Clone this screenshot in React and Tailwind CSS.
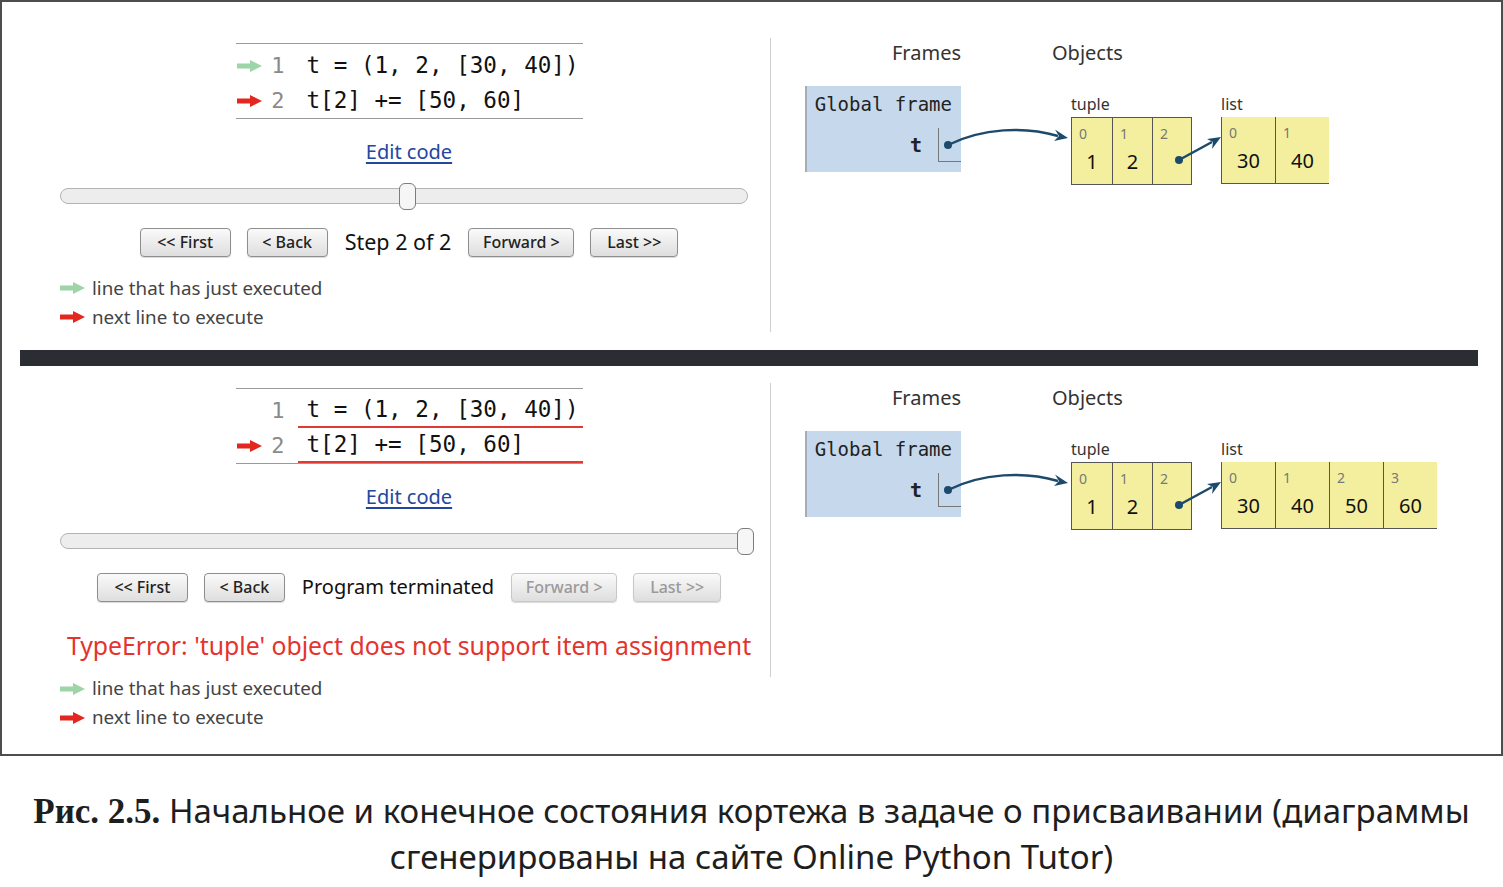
import React from 'react';

const ui = { fontFamily: '"Noto Sans", "Open Sans", sans-serif' };
const mono = { fontFamily: '"DejaVu Sans Mono", "Liberation Mono", monospace' };

const Arrow = ({ color }) => (
  <svg width="26" height="14" viewBox="0 0 26 14">
    <rect x="0" y="4.5" width="15" height="5" fill={color} />
    <polygon points="13,1 25,7 13,13" fill={color} />
  </svg>
);

const CodeBlock = ({ final }) => {
  const lines = [
    { n: 1, code: 't = (1, 2, [30, 40])', arrow: final ? null : '#9dd4a8' },
    { n: 2, code: 't[2] += [50, 60]', arrow: '#e3261f' },
  ];
  return (
    <div className="self-center w-[347px] border-t border-b border-[#9a9a9a] pt-[4px]" style={mono}>
      {lines.map((l) => (
        <div key={l.n} className="flex items-stretch h-[35px]">
          <div className="w-[30px] flex items-center pl-[1px]">{l.arrow && <Arrow color={l.arrow} />}</div>
          <div className="w-[19px] flex items-center justify-end text-[22px] text-[#8a8a8a]">{l.n}</div>
          <div
            className={`ml-[13px] pl-[9px] flex-1 flex items-center text-[22.6px] text-[#111] whitespace-pre ${
              final ? 'border-b-2 border-[#e03a32]' : ''
            }`}
          >
            {l.code}
          </div>
        </div>
      ))}
    </div>
  );
};

const Btn = ({ children, w, disabled }) => (
  <div
    className={`h-[29px] flex items-center justify-center rounded-[4px] border text-[16px] font-medium shadow-[0_1px_1px_rgba(0,0,0,0.15)] bg-gradient-to-b from-[#fafafa] to-[#dedede] ${
      disabled ? 'border-[#c8c8c8] text-[#9a9a9a]' : 'border-[#8e8e8e] text-[#222]'
    } ${w}`}
  >
    {children}
  </div>
);

const Legend = () => (
  <div className="self-start text-[18.8px] text-[#444]">
    <div className="h-[29px] flex items-center gap-[6px]">
      <Arrow color="#9dd4a8" />
      <span>line that has just executed</span>
    </div>
    <div className="h-[29px] flex items-center gap-[6px]">
      <Arrow color="#e3261f" />
      <span>next line to execute</span>
    </div>
  </div>
);

const Slider = ({ pos }) => (
  <div className="relative self-start w-[688px] h-[27px] mt-[19px]">
    <div className="absolute left-0 right-0 top-[5px] h-[16px] rounded-[8px] border border-[#b3b3b3] bg-[#ededed]" />
    <div
      className="absolute top-0 w-[17px] h-[27px] rounded-[6px] border border-[#7c7c7c] bg-[#f6f6f6]"
      style={{ left: pos }}
    />
  </div>
);

const Cell = ({ idx, val, w, cls }) => (
  <div className={`relative flex items-end justify-center pb-[7px] ${w} ${cls}`}>
    <span className="absolute left-[7px] top-[5px] text-[14px] text-[#777]">{idx}</span>
    <span className="text-[20px] text-[#111]">{val}</span>
  </div>
);

const Diagram = ({ list }) => (
  <div className="relative w-[680px] h-[160px]" style={ui}>
    <div className="flex h-[26px] items-center text-[20px] text-[#333]">
      <div className="w-[161px] text-right">Frames</div>
      <div className="ml-[91px]">Objects</div>
    </div>
    <div className="flex mt-[20px]">
      <div className="ml-[5px] w-[156px] h-[86px] bg-[#c5d8ec] border-l-2 border-[#a3aeb5] flex flex-col items-end">
        <div className="pr-[9px] mt-[6px] text-[19px] text-[#222] leading-[24px]" style={mono}>
          Global frame
        </div>
        <div className="flex items-center mt-[12px]">
          <span className="text-[20px] text-[#222] font-bold mr-[16px]" style={mono}>t</span>
          <div className="w-[23px] h-[34px] border-l border-b border-[#777]" />
        </div>
      </div>
      <div className="ml-[110px] mt-[8px]">
        <div className="h-[20px] leading-[20px] text-[16px] text-[#333]">tuple</div>
        <div className="mt-[3px] flex border-[1.5px] border-[#555] bg-[#f3ef9e]">
          <Cell idx="0" val="1" w="w-[40px] h-[66px]" />
          <Cell idx="1" val="2" w="w-[40px] h-[66px]" cls="border-l-[1.5px] border-[#555]" />
          <Cell idx="2" val="" w="w-[39px] h-[66px]" cls="border-l-[1.5px] border-[#555]" />
        </div>
      </div>
      <div className="ml-[29px] mt-[8px]">
        <div className="h-[20px] leading-[20px] text-[16px] text-[#333]">list</div>
        <div className="mt-[3px] flex bg-[#f3ef9e] border-b-[1.5px] border-[#555]">
          {list.map((v, i) => (
            <Cell key={i} idx={String(i)} val={v} w="w-[54px] h-[66px]" cls="border-l-[1.5px] border-[#555]" />
          ))}
        </div>
      </div>
    </div>
    <svg className="absolute left-0 top-0" width="680" height="160" viewBox="0 0 680 160">
      <circle cx="148" cy="105" r="4" fill="#1d4a6b" />
      <path d="M148 105 C 182 88, 225 86, 258 96" stroke="#1d4a6b" strokeWidth="2.5" fill="none" />
      <polygon points="268,98 255,89.5 259,96 254,101" fill="#1d4a6b" />
      <circle cx="379" cy="120" r="4" fill="#1d4a6b" />
      <path d="M379 120 L 412 102" stroke="#1d4a6b" strokeWidth="2.5" fill="none" />
      <polygon points="421,97 407,99 413,102 412,109" fill="#1d4a6b" />
    </svg>
  </div>
);

const Panel = ({ final }) => (
  <div className={`flex ${final ? 'h-[388px]' : 'h-[348px]'}`} style={ui}>
    <div className={`w-[768px] pl-[58px] pr-[12px] flex flex-col ${final ? 'pt-[22px]' : 'pt-[41px]'}`}>
      <CodeBlock final={final} />
      <div className="self-center mt-[21px] text-[20px] leading-[24px] text-[#2346a0] underline underline-offset-[3px]">
        Edit code
      </div>
      <Slider pos={final ? 677 : 339} />
      <div className={`self-center flex items-center gap-[16px] ${final ? 'mt-[17px]' : 'mt-[16px]'}`}>
        <Btn w="w-[91px]">&lt;&lt; First</Btn>
        <Btn w="w-[81px]">&lt; Back</Btn>
        <div className={`text-[#111] px-[1px] ${final ? 'text-[20px]' : 'text-[21.5px]'}`}>
          {final ? 'Program terminated' : 'Step 2 of 2'}
        </div>
        <Btn w="w-[106px]" disabled={final}>Forward &gt;</Btn>
        <Btn w="w-[88px]" disabled={final}>Last &gt;&gt;</Btn>
      </div>
      {final && (
        <div className="self-center mt-[28px] text-[24.8px] leading-[30px] text-[#e5332e] whitespace-nowrap">
          TypeError: 'tuple' object does not support item assignment
        </div>
      )}
      <div className={`self-start ${final ? 'mt-[14px]' : 'mt-[15px]'}`}>
        <Legend />
      </div>
    </div>
    <div className={`w-px h-[294px] bg-[#cfcfcf] ${final ? 'mt-[17px]' : 'mt-[36px]'}`} />
    <div className={`ml-[29px] ${final ? 'mt-[19px]' : 'mt-[38px]'}`}>
      <Diagram list={final ? ['30', '40', '50', '60'] : ['30', '40']} />
    </div>
  </div>
);

export default function App() {
  return (
    <div className="w-[1503px] h-[887px] bg-white overflow-hidden">
      <div className="w-[1503px] h-[756px] border-2 border-[#4d4d4d] flex flex-col">
        <Panel final={false} />
        <div className="ml-[18px] w-[1458px] h-[16px] bg-[#2a2e32]" />
        <Panel final={true} />
      </div>
      <div className="mt-[32px] text-center text-[33px] leading-[45px] text-[#1e1e1e]" style={ui}>
        <div className="whitespace-nowrap">
          <span className="font-bold text-[35px]" style={{ fontFamily: '"Liberation Serif", serif' }}>
            Рис. 2.5.
          </span>{' '}
          Начальное и конечное состояния кортежа в задаче о присваивании (диаграммы
        </div>
        <div className="whitespace-nowrap">сгенерированы на сайте Online Python Tutor)</div>
      </div>
    </div>
  );
}
